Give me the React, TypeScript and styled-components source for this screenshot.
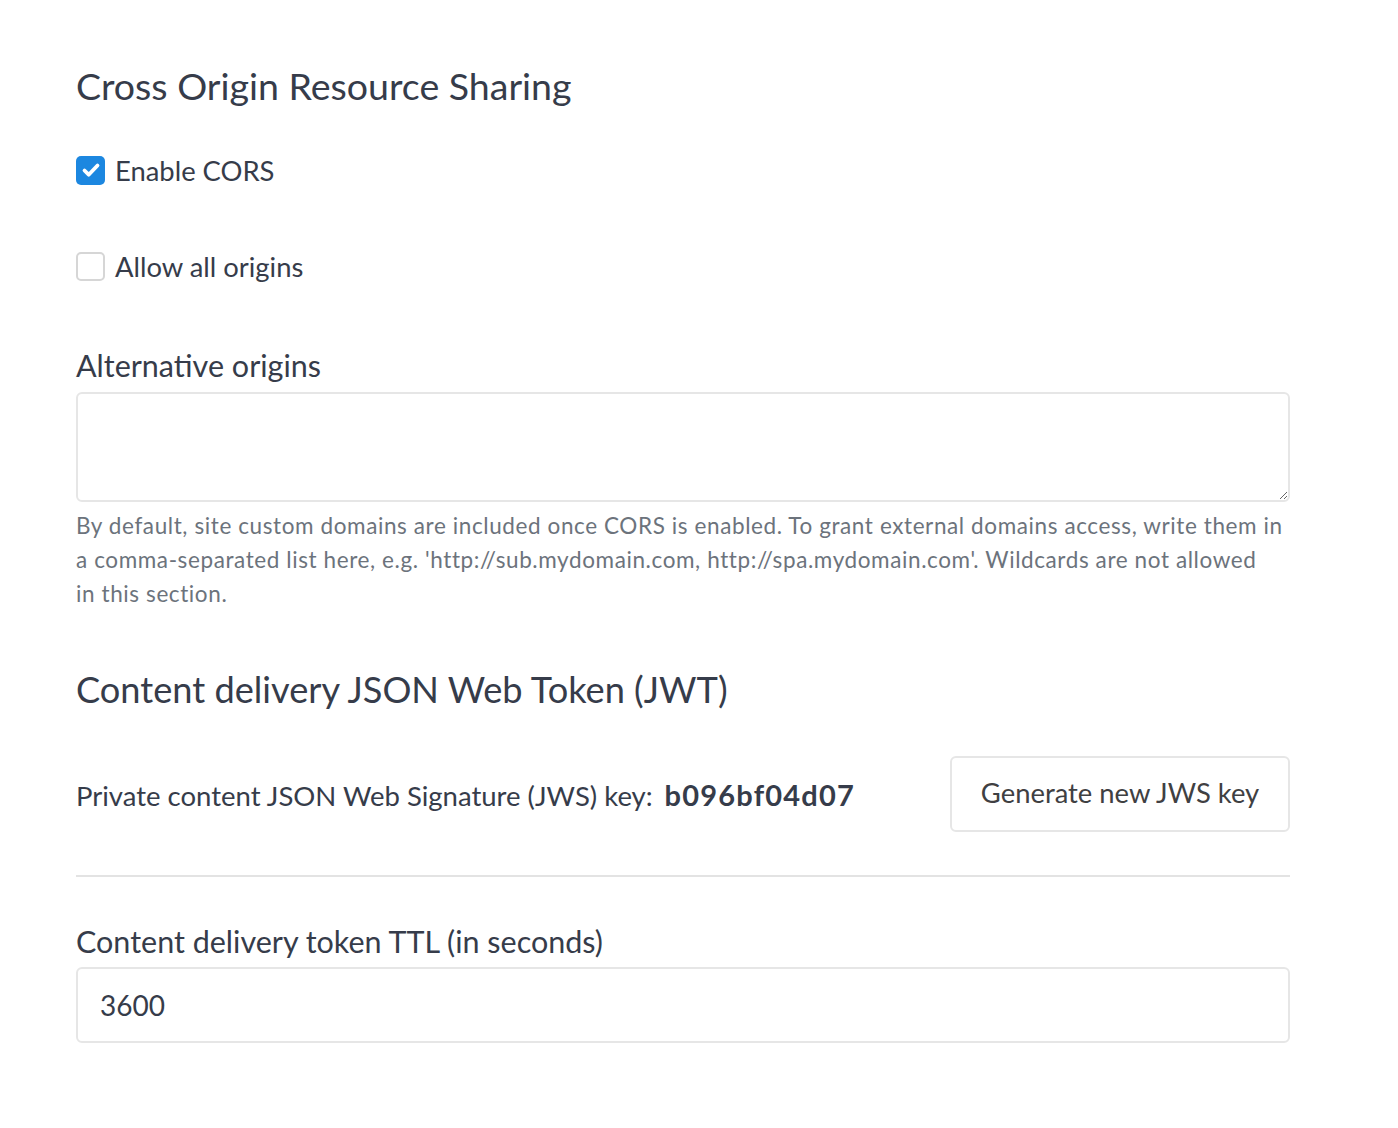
import React from "react";
import styled, { createGlobalStyle } from "styled-components";

const Global = createGlobalStyle`
  html, body { margin: 0; padding: 0; background: #ffffff; }
  body { font-family: Lato, "Open Sans", sans-serif; color: #363c4a; }
  * { box-sizing: border-box; }
`;

const Page = styled.div`
  padding: 62px 0 60px 76px;
  width: 1290px;
  display: flex;
  flex-direction: column;
`;

const Heading = styled.h2<{ $top?: number; $size?: number }>`
  margin: ${(p) => p.$top ?? 0}px 0 0 0;
  font-size: ${(p) => p.$size ?? 37}px;
  line-height: 48px;
  font-weight: 400;
  color: #363c4a;
  white-space: nowrap;
`;

const CheckRow = styled.label<{ $top: number }>`
  display: flex;
  align-items: center;
  gap: 10px;
  margin-top: ${(p) => p.$top}px;
  height: 30px;
  font-size: 27.4px;
  cursor: pointer;
`;

const Box = styled.span<{ $checked?: boolean }>`
  width: 29px;
  height: 29px;
  border-radius: 5px;
  display: inline-flex;
  align-items: center;
  justify-content: center;
  background: ${(p) => (p.$checked ? "#1c87e0" : "#ffffff")};
  border: ${(p) => (p.$checked ? "none" : "2px solid #d6d6d6")};
`;

const Label = styled.div<{ $top: number }>`
  margin-top: ${(p) => p.$top}px;
  font-size: 30.5px;
  line-height: 36px;
  white-space: nowrap;
`;

const TextArea = styled.textarea`
  margin-top: 9px;
  width: 1214px;
  height: 110px;
  border: 2px solid #e6e6e6;
  border-radius: 6px;
  resize: vertical;
  font-family: inherit;
  font-size: 24px;
  padding: 10px 22px;
  outline: none;
`;

const Help = styled.p`
  margin: 7px 0 0 0;
  width: 1214px;
  font-size: 22.5px;
  letter-spacing: 0.6px;
  line-height: 34px;
  color: #6c737c;
`;

const KeyRow = styled.div`
  margin-top: 43px;
  display: flex;
  align-items: center;
  justify-content: space-between;
  width: 1214px;
`;

const KeyText = styled.div`
  font-size: 27.5px;
  white-space: nowrap;
`;

const KeyValue = styled.strong`
  font-weight: 700;
  margin-left: 12px;
  font-size: 29px;
  letter-spacing: 1.2px;
`;

const Button = styled.button`
  height: 76px;
  width: 340px;
  padding: 0 0 4px 0;
  background: #ffffff;
  border: 2px solid #e6e6e6;
  border-radius: 6px;
  font-family: inherit;
  font-size: 27.4px;
  color: #3f4042;
  cursor: pointer;
`;

const Rule = styled.hr`
  margin: 43px 0 0 0;
  width: 1214px;
  border: none;
  border-top: 2px solid #e3e3e3;
`;

const Input = styled.input`
  margin-top: 8px;
  width: 1214px;
  height: 76px;
  border: 2px solid #e6e6e6;
  border-radius: 6px;
  padding: 0 22px;
  font-family: inherit;
  font-size: 28px;
  color: #363c4a;
  outline: none;
`;

const Check = () => (
  <svg width="20" height="20" viewBox="0 0 20 20" fill="none">
    <path d="M3.5 10.5l4.2 4.2L16.5 5.5" stroke="#fff" strokeWidth="3.8" strokeLinecap="round" strokeLinejoin="round" />
  </svg>
);

export default function App() {
  return (
    <>
      <Global />
      <Page>
        <Heading $size={37.5}>Cross Origin Resource Sharing</Heading>
        <CheckRow $top={45}>
          <Box $checked>
            <Check />
          </Box>
          Enable CORS
        </CheckRow>
        <CheckRow $top={66}>
          <Box />
          Allow all origins
        </CheckRow>
        <Label $top={66}>Alternative origins</Label>
        <TextArea />
        <Help>
          By default, site custom domains are included once CORS is enabled. To grant external domains access, write them in a
          comma-separated list here, e.g. 'http://sub.mydomain.com, http://spa.mydomain.com'. Wildcards are not allowed
          <br />
          in this section.
        </Help>
        <Heading $top={54} $size={36.2}>Content delivery JSON Web Token (JWT)</Heading>
        <KeyRow>
          <KeyText>
            Private content JSON Web Signature (JWS) key:
            <KeyValue>b096bf04d07</KeyValue>
          </KeyText>
          <Button>Generate new JWS key</Button>
        </KeyRow>
        <Rule />
        <Label $top={46}>Content delivery token TTL (in seconds)</Label>
        <Input defaultValue="3600" />
      </Page>
    </>
  );
}
